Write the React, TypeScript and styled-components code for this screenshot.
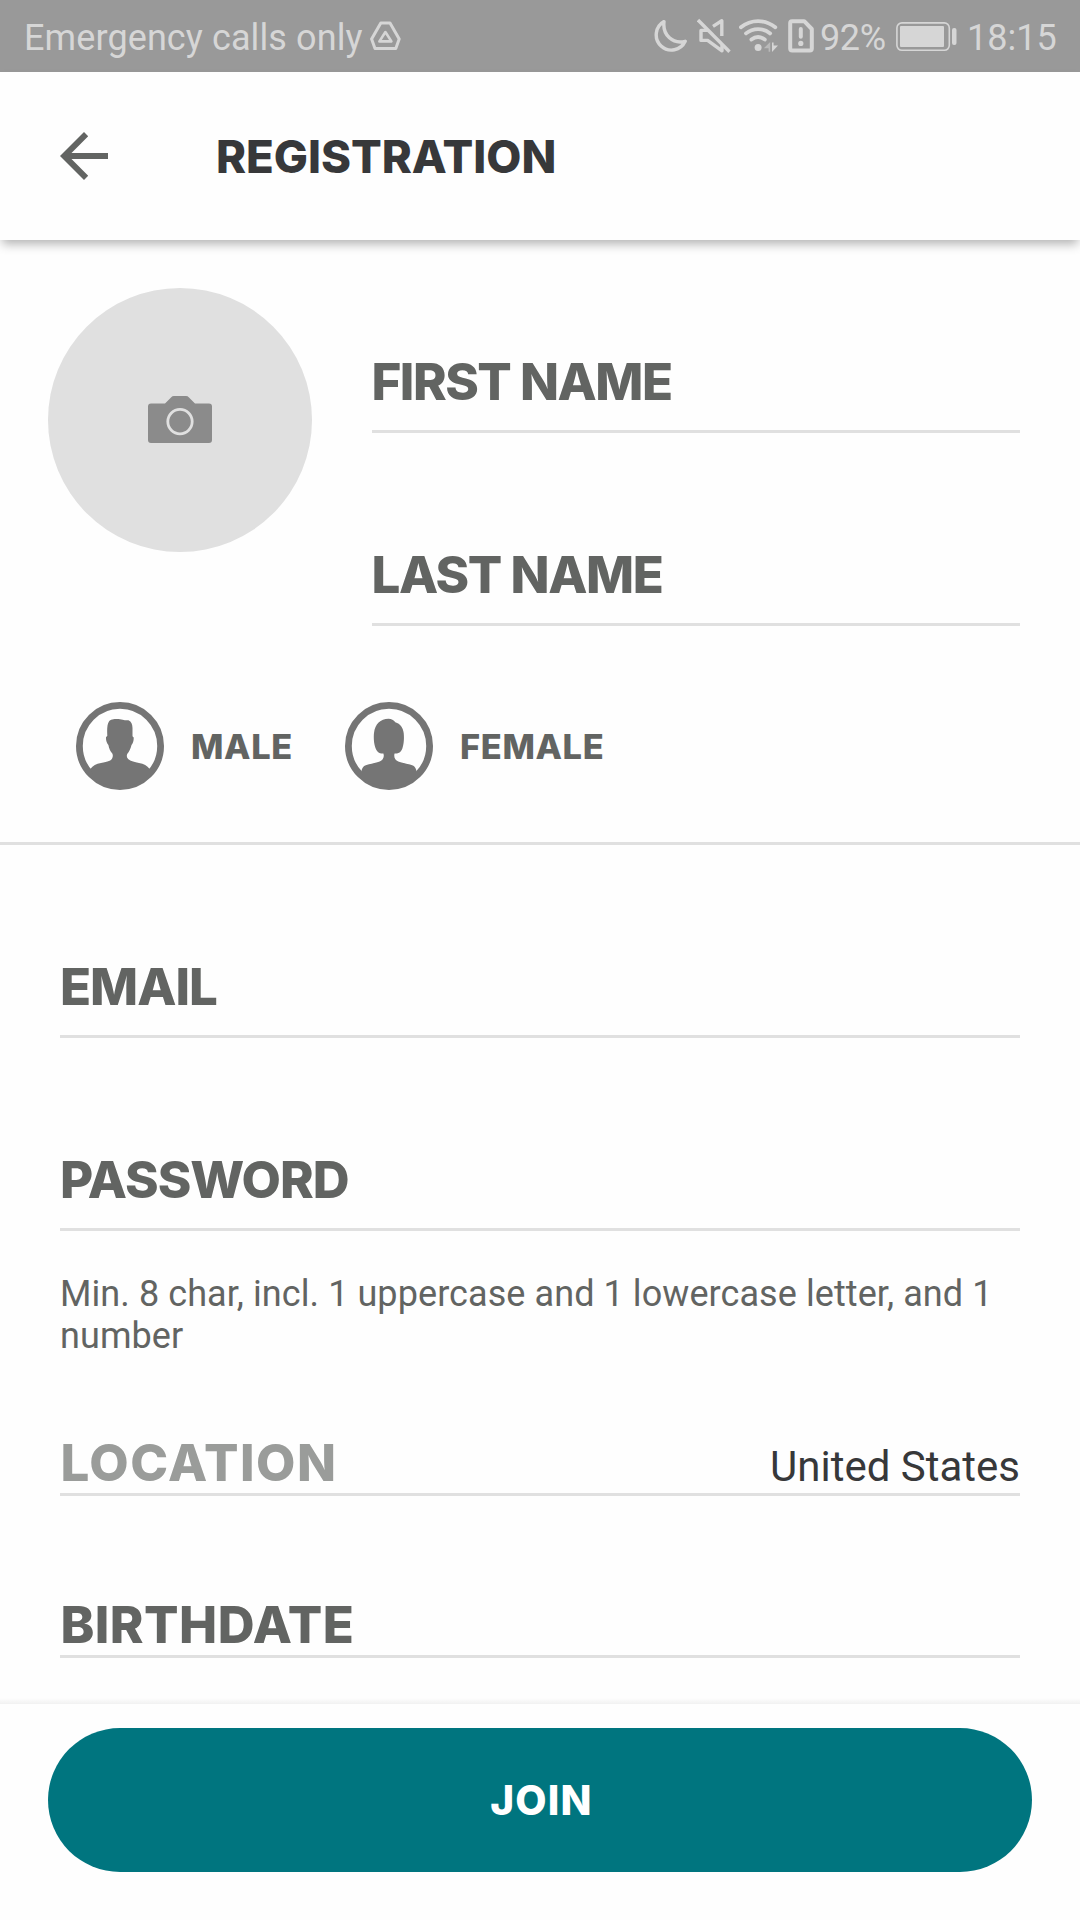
import React from 'react';
import styled, { createGlobalStyle } from 'styled-components';

const GlobalStyle = createGlobalStyle`
  *, *::before, *::after { box-sizing: border-box; }
  html, body { margin: 0; padding: 0; background: #fefefe; }
  button { border: 0; background: none; padding: 0; margin: 0; }
`;

const Screen = styled.div`
  width: 1080px;
  height: 1920px;
  display: flex;
  flex-direction: column;
  overflow: hidden;
  background: #fefefe;
  font-family: Roboto, 'Liberation Sans', sans-serif;
  color: #626462;
`;

const StatusBar = styled.div`
  flex: none;
  display: flex;
  align-items: center;
  justify-content: space-between;
  height: 72px;
  padding: 0 23px 0 24px;
  background: #999999;
  color: #d6d6d6;
`;

const StatusGroup = styled.div`
  display: flex;
  align-items: center;
`;

const StatusText = styled.span<{ $width: number; $left?: number; $spacing?: number }>`
  width: ${p => p.$width}px;
  margin-left: ${p => p.$left ?? 0}px;
  padding-top: 4px;
  font-size: 36px;
  line-height: 68px;
  letter-spacing: ${p => p.$spacing ?? 0}px;
  white-space: nowrap;
`;

const StatusIcon = styled.svg<{ $left?: number }>`
  flex: none;
  display: block;
  margin-left: ${p => p.$left ?? 0}px;
  fill: none;
  stroke: #d6d6d6;
  stroke-width: 3.4;
  stroke-linejoin: round;
`;

const Toolbar = styled.header`
  position: relative;
  z-index: 1;
  flex: none;
  display: flex;
  align-items: center;
  height: 168px;
  padding-left: 60px;
  background: #fefefe;
  box-shadow: 0 6px 10px -2px rgba(0, 0, 0, 0.3);
`;

const BackButton = styled.button`
  width: 48px;
  height: 48px;
  margin-right: 108px;

  svg { display: block; }
`;

const Title = styled.h1`
  margin: 0;
  padding-top: 2px;
  font: 800 45.5px/60px Inter, 'Liberation Sans', sans-serif;
  letter-spacing: -0.05px;
  color: #37383a;
`;

const Profile = styled.section`
  flex: none;
  display: flex;
  padding: 0 60px 0 48px;
`;

const Avatar = styled.button`
  flex: none;
  display: flex;
  align-items: center;
  justify-content: center;
  width: 264px;
  height: 264px;
  margin: 48px 60px 0 0;
  border-radius: 50%;
  background: #e0e0e0;
`;

const Fields = styled.div`
  flex: 1;
`;

const Field = styled.div`
  display: flex;
  flex-direction: column;
  justify-content: flex-end;
  height: 193px;
  padding-bottom: 18px;
  border-bottom: 3px solid #e0e0e0;
`;

const Label = styled.label<{ $spacing: number; $shift?: number; $muted?: boolean }>`
  margin-left: ${p => p.$shift ?? 0}px;
  font: 800 51px/60px Inter, 'Liberation Sans', sans-serif;
  letter-spacing: ${p => p.$spacing}px;
  white-space: nowrap;
  color: ${p => (p.$muted ? '#9a9c9a' : '#626462')};
`;

const GenderRow = styled.div`
  flex: none;
  display: flex;
  align-items: center;
  height: 219px;
  padding: 24px 76px 0;
  border-bottom: 3px solid #e0e0e0;
`;

const GenderOption = styled.label`
  display: flex;
  align-items: center;
  gap: 27px;
  width: 269px;
  font: 800 34.4px/44px Inter, 'Liberation Sans', sans-serif;
  letter-spacing: 0.65px;
`;

const GenderName = styled.span`
  padding-top: 2px;
`;

const Account = styled.section`
  flex: 1;
  padding: 0 60px;
`;

const Hint = styled.p`
  margin: 42px 0 0;
  font-size: 36px;
  line-height: 42px;
  letter-spacing: 0.08px;
`;

const PickerRow = styled.div<{ $height: number }>`
  display: flex;
  align-items: flex-end;
  justify-content: space-between;
  height: ${p => p.$height}px;
  border-bottom: 3px solid #e0e0e0;

  ${Label} { line-height: 61px; }
`;

const PickerValue = styled.span`
  font-size: 42px;
  line-height: 53px;
  color: #37383a;
`;

const FooterShade = styled.div`
  flex: none;
  height: 6px;
  background: linear-gradient(to bottom, #fefefe, #f1f1f1);
`;

const Footer = styled.footer`
  flex: none;
  height: 216px;
  padding: 24px 48px 48px;
`;

const JoinButton = styled.button`
  display: flex;
  align-items: center;
  justify-content: center;
  width: 100%;
  height: 144px;
  padding: 2px 0 0 3px;
  border-radius: 72px;
  background: #00757f;
  color: #ffffff;
  font: 800 40.5px/56px Inter, 'Liberation Sans', sans-serif;
  letter-spacing: 1.2px;
`;

const GenderIcon = ({ d }: { d: string }) => (
  <svg width="88" height="88" viewBox="0 0 88 88">
    <circle cx="44" cy="44" r="40.6" fill="none" stroke="#757575" strokeWidth="6.8" />
    <path d={d} fill="#757575" />
  </svg>
);

const MALE =
  'M14.3 67C17 63.5 20 62 25 61C32 59.5 35.5 58.5 36.2 56.2C37 54.5 37 53.2 36.3 51.6C34.3 49.5 33 46.5 32.4 43C30.6 41 29.8 38 30 35.2L31.3 33.8C31 28 31 22.5 33 19.5C34.5 17 40 17 44 17.2C48 18.2 50 18.2 52.5 18.2C55.5 19.5 56.3 22 56.5 26L56.5 34.2L57.7 35.4C57.8 38 57.2 41 55.5 43C54.8 46.5 53 50 51.2 52C50.5 54 50.8 55.5 51.8 56.6C53 58.6 57 59.8 63 61C68 62 71 63.5 73.7 67L69 76Q44 94 19 76Z';

const FEMALE =
  'M16.5 69C17.3 65 19 63.4 24 62.2C31 60.7 36 60 37.8 57C39 55 39 53.5 38.4 51.6C34 51.8 31.5 49.5 30.3 45.5C28.8 41 28.5 35 29 31C30 22 35.5 17 43.5 16.8C46.5 16.8 48.7 18 50.3 20.2C55.5 21.8 58 25.5 58.7 31C59.2 36 59 41 57.5 46C56.5 49.7 54 51.8 49.6 51.6C49 53.5 49.2 55.5 50.2 57C52 60 57 60.7 64 62.2C69 63.4 70.7 65 71.5 69L69 76Q44 94 19 76Z';

export default function App() {
  return (
    <>
      <GlobalStyle />
      <Screen>
        <StatusBar>
          <StatusGroup>
            <StatusText $width={339} $spacing={0.1}>Emergency calls only</StatusText>
            <StatusIcon $left={7} width="31" height="30" viewBox="0 0 31 30">
              <path d="M10.8 2H20L29.2 18L25.8 27.4H5L1.6 18Z" strokeWidth="3" />
              <path d="M15.4 11L21.4 20.4H9.4Z" strokeWidth="2.6" />
            </StatusIcon>
          </StatusGroup>
          <StatusGroup>
            <StatusIcon width="34" height="36" viewBox="0 0 34 36">
              <path d="M10 3.6A15.2 15.2 0 1 0 31.2 23.3C19 26.4 8.4 17.5 10 3.6Z" strokeWidth="3.4" />
            </StatusIcon>
            <StatusIcon $left={9} width="34" height="36" viewBox="0 0 34 36">
              <path d="M1 2L32.5 33.8" />
              <path d="M16 8.4L24.8 2.8V18" />
              <path d="M11 12.4H4V22.4H10.6L25 32.8V27" />
            </StatusIcon>
            <StatusIcon $left={8} width="40" height="36" viewBox="0 0 40 36">
              <g strokeWidth="3.8" strokeLinecap="round">
                <path d="M1.9 9.3C12 1 26 1 36.3 9.3" />
                <path d="M7 15.4C14 9.6 24 9.6 31.2 15.4" />
                <path d="M12.4 21.5C16.5 18.3 21.5 18.3 25.8 21.5" />
              </g>
              <circle cx="19.1" cy="29.5" r="3.5" fill="#d6d6d6" stroke="none" />
              <path d="M31.2 24V33.8H29.6V30.2H24.8Z" fill="#b9b9b9" stroke="none" />
              <path d="M33 34V24.4H34.6V27.4H39Z" fill="#d6d6d6" stroke="none" />
            </StatusIcon>
            <StatusIcon $left={9} width="26" height="36" viewBox="0 0 26 36">
              <path d="M4 3.2H16.2L23.8 11V30.4Q23.8 32.4 21.8 32.4H4.2Q2.2 32.4 2.2 30.4V5Q2.2 3.2 4 3.2Z" strokeWidth="4" />
              <path d="M12.8 11V18.8" strokeWidth="4" strokeLinecap="round" />
              <circle cx="12.8" cy="25.4" r="2.6" fill="#d6d6d6" stroke="none" />
            </StatusIcon>
            <StatusText $left={6} $width={67} $spacing={-0.4}>92%</StatusText>
            <StatusIcon $left={9} width="61" height="36" viewBox="0 0 61 36">
              <rect x="0.9" y="4.9" width="52.4" height="27.4" rx="5" strokeWidth="1.6" />
              <rect x="4" y="8" width="44" height="21" rx="1" fill="#d6d6d6" stroke="none" />
              <rect x="56" y="10" width="4.5" height="17" rx="2" fill="#d6d6d6" stroke="none" />
            </StatusIcon>
            <StatusText $left={10} $width={90}>18:15</StatusText>
          </StatusGroup>
        </StatusBar>

        <Toolbar>
          <BackButton aria-label="Back">
            <svg width="48" height="48" viewBox="0 0 48 48">
              <path d="M48 21H11.5L28.2 4.2L24 0L0 24L24 48L28.2 43.8L11.5 27H48Z" fill="#626462" />
            </svg>
          </BackButton>
          <Title>REGISTRATION</Title>
        </Toolbar>

        <Profile>
          <Avatar aria-label="Add photo">
            <svg width="64" height="48" viewBox="0 0 64 48">
              <path
                d="M3 7.5H17L23 1.4Q24.3 0 26 0H38Q39.7 0 41 1.4L47 7.5H61Q64 7.5 64 10.5V44Q64 47 61 47H3Q0 47 0 44V10.5Q0 7.5 3 7.5Z"
                fill="#8b8b8b"
              />
              <circle cx="32" cy="25.6" r="12.2" fill="none" stroke="#e0e0e0" strokeWidth="2.8" />
            </svg>
          </Avatar>
          <Fields>
            <Field><Label $spacing={-1.5} $shift={-0.5}>FIRST NAME</Label></Field>
            <Field><Label $spacing={-1.45} $shift={-0.5}>LAST NAME</Label></Field>
          </Fields>
        </Profile>

        <GenderRow>
          <GenderOption><GenderIcon d={MALE} /><GenderName>MALE</GenderName></GenderOption>
          <GenderOption><GenderIcon d={FEMALE} /><GenderName>FEMALE</GenderName></GenderOption>
        </GenderRow>

        <Account>
          <Field><Label $spacing={-1}>EMAIL</Label></Field>
          <Field><Label $spacing={-1}>PASSWORD</Label></Field>
          <Hint>Min. 8 char, incl. 1 uppercase and 1 lowercase letter, and 1 number</Hint>
          <PickerRow $height={139}>
            <Label $spacing={1.45} $shift={0.5} $muted>LOCATION</Label>
            <PickerValue>United States</PickerValue>
          </PickerRow>
          <PickerRow $height={162}>
            <Label $spacing={0.45} $shift={0.5}>BIRTHDATE</Label>
          </PickerRow>
        </Account>

        <FooterShade />
        <Footer>
          <JoinButton>JOIN</JoinButton>
        </Footer>
      </Screen>
    </>
  );
}
